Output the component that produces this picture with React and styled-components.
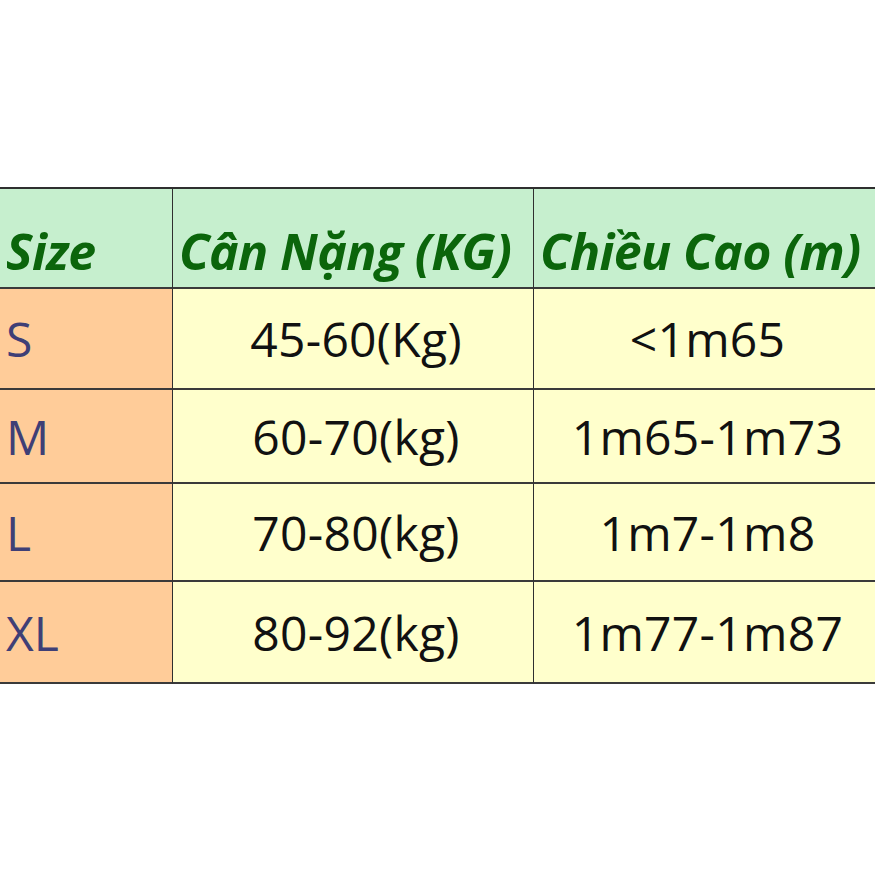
import React from "react";
import styled, { createGlobalStyle } from "styled-components";

const GlobalStyle = createGlobalStyle`
  html, body {
    margin: 0;
    padding: 0;
    background: #ffffff;
  }
  body {
    font-family: "Open Sans", "Liberation Sans", sans-serif;
  }
`;

const Page = styled.div`
  width: 877px;
  height: 877px;
  padding-top: 187px;
  box-sizing: border-box;
`;

const Table = styled.div`
  display: grid;
  width: 875px;
  grid-template-columns: 172px 361px 342px;
  grid-template-rows: 100px 101px 94px 98px 102px;
  border-top: 2px solid #2f2f2f;
  box-sizing: border-box;
`;

const Cell = styled.div`
  display: flex;
  align-items: ${(p) => (p.head ? "flex-end" : "center")};
  justify-content: ${(p) => (p.center ? "center" : "flex-start")};
  padding: ${(p) => (p.head ? "0 0 2px 6px" : "0 0 0 6px")};
  background: ${(p) => p.bg};
  border-left: ${(p) => (p.first ? "none" : "1px solid #2f2f2f")};
  border-bottom: 2px solid #3a3a3a;
  box-sizing: border-box;
  overflow: hidden;
  white-space: nowrap;
`;

const HeadText = styled.span`
  font-style: italic;
  font-weight: 700;
  font-size: 50px;
  color: #0b650b;
  letter-spacing: -0.6px;
`;

const SizeText = styled.span`
  font-size: 48px;
  color: #3f3f76;
`;

const ValueText = styled.span`
  font-size: 48px;
  color: #111;
  letter-spacing: 0.3px;
`;

const HEAD_BG = "#c6efce";
const SIZE_BG = "#ffcc99";
const VALUE_BG = "#ffffcc";

const rows = [
  ["S", "45-60(Kg)", "<1m65"],
  ["M", "60-70(kg)", "1m65-1m73"],
  ["L", "70-80(kg)", "1m7-1m8"],
  ["XL", "80-92(kg)", "1m77-1m87"],
];

export default function App() {
  return (
    <>
      <GlobalStyle />
      <Page>
        <Table>
          <Cell head first bg={HEAD_BG}>
            <HeadText>Size</HeadText>
          </Cell>
          <Cell head bg={HEAD_BG}>
            <HeadText>Cân Nặng (KG)</HeadText>
          </Cell>
          <Cell head bg={HEAD_BG}>
            <HeadText>Chiều Cao (m)</HeadText>
          </Cell>
          {rows.map(([size, weight, height]) => (
            <React.Fragment key={size}>
              <Cell first bg={SIZE_BG}>
                <SizeText>{size}</SizeText>
              </Cell>
              <Cell center bg={VALUE_BG}>
                <ValueText>{weight}</ValueText>
              </Cell>
              <Cell center bg={VALUE_BG}>
                <ValueText>{height}</ValueText>
              </Cell>
            </React.Fragment>
          ))}
        </Table>
      </Page>
    </>
  );
}
